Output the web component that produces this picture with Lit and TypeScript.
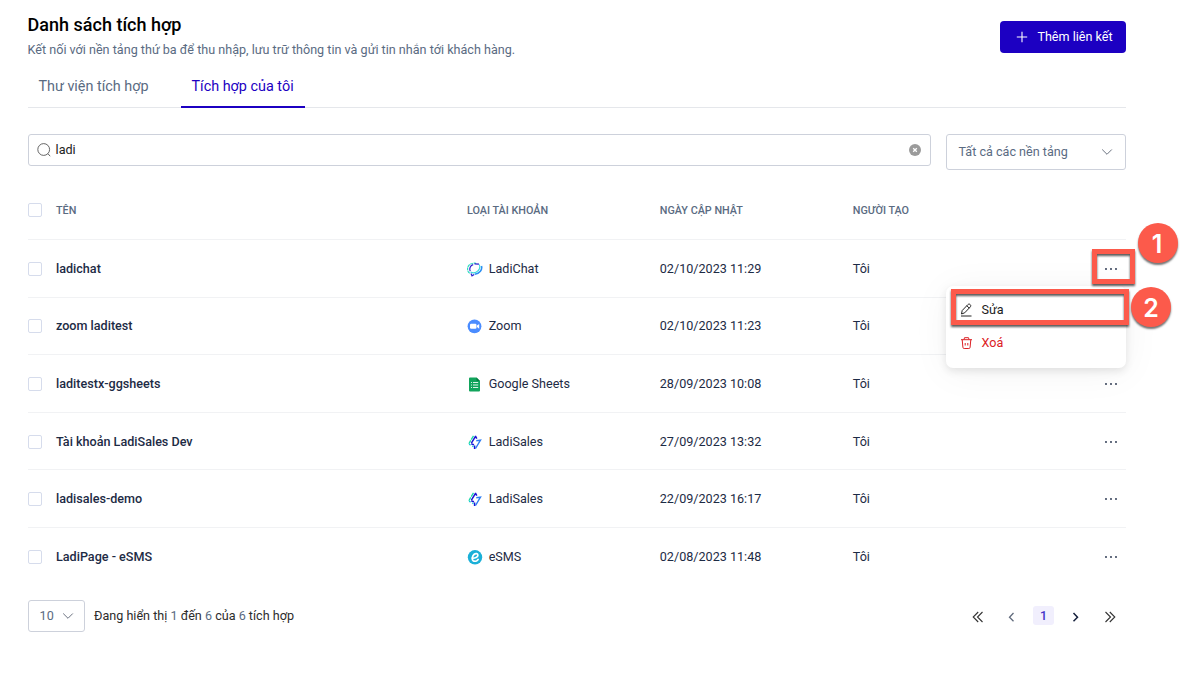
import { LitElement, html, css, svg } from "lit";
import { customElement } from "lit/decorators.js";

const icons: Record<string, unknown> = {
  chat: svg`<svg width="16" height="16" viewBox="0 0 16 16" fill="none" stroke-width="1.2">
    <path d="M2.800 12.300C.3 10.900-.1 7.300 1.500 4.900 2.900 2.800 6 1.800 9 2.300" stroke="#2fdcc0" stroke-dasharray="3 .6"/>
    <path d="M3.200 10.300C1.900 7.300 3.400 4.500 6.200 3.600M7.500 2.900l4.500.3" stroke="#2a1fd0"/>
    <path d="M12.200 3.500c1.600 2.600.2 6.300-3.200 7.800-1.900.8-3.800.6-5.400-.2" stroke="#3fd9dc"/>
    <path d="M14.500 4.900c1.200 3.700-1.900 7.600-6.700 8.400" stroke="#2b8ff3" stroke-width="1.500"/>
    <path d="M4 12.500l1 2.300 2.200-1.300" stroke="#2a1fd0"/></svg>`,
  zoom: svg`<svg width="16" height="16" viewBox="0 0 16 16"><circle cx="7.500" cy="8.300" r="6.900" fill="#4a8cff"/>
    <rect x="3" y="5.800" width="6.500" height="5" rx="1.200" fill="#fff"/><path d="M10 7.600l2.200-1.600v4.700L10 9.100z" fill="#fff"/></svg>`,
  sheets: svg`<svg width="16" height="16" viewBox="0 0 16 16"><path d="M3 1.500h6.500L13 5v9.500a1 1 0 0 1-1 1H3a1 1 0 0 1-1-1v-12a1 1 0 0 1 1-1z" fill="#12a45c"/>
    <path d="M9.500 1.500L13 5H9.500z" fill="#0a7a42"/><path d="M4 6.500h1M6 6.500h5.200M4 9h1M6 9h5.200M4 11.500h1M6 11.500h5.200" stroke="#d9f2e4" stroke-width="1"/></svg>`,
  sales: svg`<svg width="16" height="16" viewBox="0 0 16 16" fill="none" stroke-width="1.300">
    <path d="M6.500 1.800L4.200 5.600M3.700 6.400L1.900 9.800" stroke="#19d9a8"/>
    <path d="M8.600 2.200L4.400 9.200M8.300 1.800l1.500 2.800M4.200 9.900l2.800.8M7.600 11.500v3.500" stroke="#1b13d6" stroke-width="1.500"/>
    <path d="M9.300 6.700l4.200-.6-5 8.400" stroke="#2b7bf3" stroke-width="1.400"/><path d="M2 10.400l1.800.6M5.400 11.800l1 1" stroke="#16c9d8"/></svg>`,
  esms: svg`<svg width="16" height="16" viewBox="0 0 16 16"><circle cx="8" cy="8.300" r="7.200" fill="#1bb0d8"/>
    <path d="M5 9.200c2.800.3 6-.9 5.900-3.200C10.800 4.500 8.700 4 7 5.500 5.100 7.200 4.600 10.600 6.200 11.800c1.500 1 3.800.2 4.900-1.400" fill="none" stroke="#fff" stroke-width="1.700" stroke-linecap="round"/></svg>`,
};

const chevron = svg`<svg width="12" height="8" viewBox="0 0 12 8" fill="none" stroke="#6b7280" stroke-width="1"><path d="M1.200 1.500L6 6.300l4.800-4.800"/></svg>`;

const rows = [
  ["ladichat", "chat", "LadiChat", "02/10/2023 11:29"],
  ["zoom laditest", "zoom", "Zoom", "02/10/2023 11:23"],
  ["laditestx-ggsheets", "sheets", "Google Sheets", "28/09/2023 10:08"],
  ["Tài khoản LadiSales Dev", "sales", "LadiSales", "27/09/2023 13:32"],
  ["ladisales-demo", "sales", "LadiSales", "22/09/2023 16:17"],
  ["LadiPage - eSMS", "esms", "eSMS", "02/08/2023 11:48"],
];

@customElement("app-root")
export class AppRoot extends LitElement {
  static styles = css`
    :host { display: block; position: relative; width: 1194px; height: 697px; overflow: hidden; background: #fff;
      font-family: Roboto, "Noto Sans", sans-serif; font-size: 12.6px; color: #1d2b45; }
    * { box-sizing: border-box; }
    svg { display: block; flex: none; }
    .page { width: 1098.400px; margin-left: 27.600px; padding-top: 14px; display: flex; flex-direction: column; }
    .head { display: flex; justify-content: space-between; height: 53px; }
    .title { margin: 0; font-size: 18px; line-height: 22px; font-weight: 500; color: #000; }
    .sub { margin: 5px 0 0; line-height: 18px; color: #5a6b82; }
    .add { display: flex; align-items: center; gap: 9px; height: 32px; width: 126px; margin-top: 7px; padding: 0 0 0 16px; border: 0;
      border-radius: 4px; background: #1c00c2; color: #fff; font: inherit; }
    .add span { padding-bottom: 1px; padding-left: .4px; }
    .tabs { display: flex; gap: 21.400px; height: 41px; border-bottom: 1px solid #e5e7eb; font-size: 14.4px; }
    .tab { height: 41px; padding: 11px 10.800px 0; line-height: 18px; color: #5a6b82; white-space: nowrap; }
    .active { padding-right: 11.500px; color: #1c00c2; border-bottom: 2px solid #1c00c2; }
    .filters { display: flex; gap: 15px; height: 36px; margin-top: 26px; align-items: flex-start; }
    .search { flex: 1; display: flex; align-items: center; height: 32px; padding: 0 9px 0 8px; border: 1px solid #cdd1db; border-radius: 3px; gap: 5px; color: #222; }
    .search .value { flex: 1; padding-bottom: 1px; }
    .select { display: flex; align-items: center; justify-content: space-between; width: 180px; height: 36px; padding: 0 12px 1px 11.500px;
      border: 1px solid #cdd1db; border-radius: 3px; color: #5a6b82; }
    .row { display: grid; grid-template-columns: 28.400px 411px 192.800px 193px 1fr 22px; align-items: center; height: 57.6px; border-bottom: 1px solid #f1f2f4; }
    .row:last-child { border-bottom: 0; height: 57px; }
    .header { height: 70px; padding-top: 11px; font-size: 10.8px; font-weight: 500; color: #5a6b82; }
    .check { width: 14px; height: 14px; border: 1px solid #d6dcec; border-radius: 2px; }
    .row:not(.header) .check, .dots, .kind svg { margin-top: 1px; }
    .name { font-weight: 500; }
    .kind { display: flex; align-items: center; gap: 5.700px; }
    .foot { display: flex; align-items: center; height: 32px; margin-top: 14.600px; color: #2c2c2c; }
    .size { display: flex; align-items: center; gap: 8px; width: 57px; height: 32px; padding-left: 11px; margin-right: 9.400px;
      border: 1px solid #cdd1db; border-radius: 3px; color: #5a6b82; }
    .count { flex: 1; }
    .num { color: #5a6b82; }
    .pager { display: flex; align-items: center; padding-right: 10px; }
    .pager svg { margin-top: 2px; }
    .cur { width: 21px; height: 19px; line-height: 19px; margin: 0 16px; border-radius: 3px; background: #f1effd; color: #4534c8; text-align: center; font-weight: 500; }
    .pager .first { margin-right: 23px; } .pager .last { margin-left: 24px; }
    .menu { position: absolute; left: 946px; top: 286px; width: 180px; height: 82px; padding: 7px 14px; border-radius: 7px; background: #fff; box-shadow: 0 3px 8px rgba(0,0,0,.1), 0 4px 38px rgba(0,0,0,.05); }
    .item { display: flex; align-items: center; gap: 8.500px; height: 33px; color: #1c1c1c; }
    .danger { color: #dc2025; }
    .mark { position: absolute; border: 5px solid #fc5a4b; filter: drop-shadow(0 2px 1px rgba(0,0,0,.65)); }
    .m1 { left: 1092px; top: 249px; width: 43px; height: 35px; }
    .m2 { left: 951px; top: 289px; width: 178px; height: 36px; }
    .ball { position: absolute; width: 40px; height: 40px; border-radius: 50%; background: #fc5a4b; color: #fff; text-align: center;
      font: 600 25px/43px Inter, sans-serif; box-shadow: 0 2px 2px rgba(0,0,0,.55); }
    .b1 { left: 1138px; top: 223px; padding-right: 2px; }
    .b2 { left: 1131px; top: 287px; }
  `;

  render() {
    return html`
      <main class="page">
        <header class="head">
          <div><h1 class="title">Danh sách tích hợp</h1>
            <p class="sub">Kết nối với nền tảng thứ ba để thu nhập, lưu trữ thông tin và gửi tin nhắn tới khách hàng.</p></div>
          <button class="add"><svg width="12" height="12" viewBox="0 0 12 12" stroke="#fff" stroke-width="1.100"><path d="M6 .8v10.400M.8 6h10.400"/></svg><span>Thêm liên kết</span></button>
        </header>
        <nav class="tabs"><div class="tab">Thư viện tích hợp</div><div class="tab active">Tích hợp của tôi</div></nav>
        <div class="filters">
          <div class="search">
            <svg width="14" height="14" viewBox="0 0 14 14" fill="none" stroke="#555" stroke-width=".9"><circle cx="6.700" cy="6.500" r="5.900"/><path d="M10.900 10.700l2.300 2.500"/></svg>
            <span class="value">ladi</span>
            <svg width="12" height="12" viewBox="0 0 12 12"><circle cx="6" cy="6" r="6" fill="#9b9b9b"/><path d="M4.200 4.200l3.600 3.600M7.800 4.200L4.200 7.800" stroke="#fff" stroke-width="1.300"/></svg>
          </div>
          <div class="select">Tất cả các nền tảng ${chevron}</div>
        </div>
        <section>
          <div class="row header"><i class="check"></i><span>TÊN</span><span>LOẠI TÀI KHOẢN</span><span>NGÀY CẬP NHẬT</span><span>NGƯỜI TẠO</span></div>
          ${rows.map(([name, icon, kind, date]) => html`<div class="row"><i class="check"></i><span class="name">${name}</span>
            <span class="kind">${icons[icon]}${kind}</span><span>${date}</span><span>Tôi</span>
            <svg class="dots" width="14" height="4" viewBox="0 0 14 4" fill="#1d2b45"><circle cx="2" cy="2" r=".9"/><circle cx="7" cy="2" r=".9"/><circle cx="12" cy="2" r=".9"/></svg></div>`)}
        </section>
        <footer class="foot">
          <div class="size">10 ${chevron}</div>
          <div class="count">Đang hiển thị <span class="num">1</span> đến <span class="num">6</span> của <span class="num">6</span> tích hợp</div>
          <div class="pager">
            <svg class="first" width="12" height="12" viewBox="0 0 12 12" fill="none" stroke="#333" stroke-width="1.100"><path d="M6.200 1L1.200 6l5 5M10.500 1l-5 5 5 5"/></svg>
            <svg width="10" height="12" viewBox="0 0 10 12" fill="none" stroke="#606a7c" stroke-width="1.300"><path d="M6.500 2L2.500 6.200l4 4"/></svg>
            <div class="cur">1</div>
            <svg width="10" height="12" viewBox="0 0 10 12" fill="none" stroke="#15203c" stroke-width="1.500"><path d="M3.500 2l4 4.200-4 4"/></svg>
            <svg class="last" width="12" height="12" viewBox="0 0 12 12" fill="none" stroke="#333" stroke-width="1.100"><path d="M1.500 1l5 5-5 5M5.800 1l5 5-5 5"/></svg>
          </div>
        </footer>
      </main>
      <div class="menu">
        <div class="item"><svg width="13" height="14" viewBox="0 0 13 14" fill="none" stroke="#222" stroke-width="1"><path d="M1.500 11l.7-3.500L7.800 1.700c.8-.8 1.700-.8 2.400-.1s.8 1.600 0 2.400L4.700 9.800zM6.800 2.700l2.500 2.500M1 13h10.500"/></svg>Sửa</div>
        <div class="item danger"><svg width="13" height="14" viewBox="0 0 13 14" fill="none" stroke="#dc2025" stroke-width="1"><path d="M1 3.700h11M4 3.500l.5-1.800h4L9 3.500M2.200 3.700l.7 7.600c.1.900.5 1.200 1.300 1.200h4.600c.8 0 1.200-.3 1.300-1.200l.7-7.600M5.200 7v2.500M7.800 7v2.500"/></svg>Xoá</div>
      </div>
      <div class="mark m1"></div><div class="mark m2"></div>
      <div class="ball b1">1</div><div class="ball b2">2</div>
    `;
  }
}
